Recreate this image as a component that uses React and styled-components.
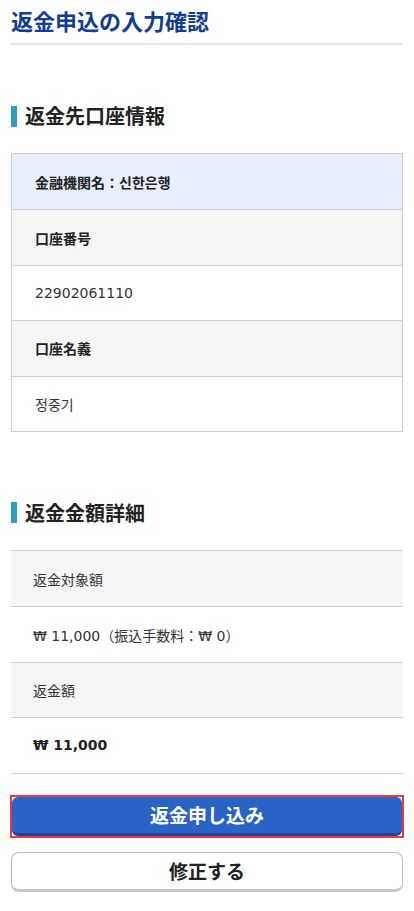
import React from 'react'
import styled, { createGlobalStyle } from 'styled-components'

const GlobalStyle = createGlobalStyle`
  html, body {
    margin: 0;
    padding: 0;
    background: #fff;
  }
  body {
    font-family: "DejaVu Sans", "Noto Sans CJK JP", "Noto Sans CJK KR", sans-serif;
    color: #333;
  }
`

const Page = styled.div`
  padding: 0 11px 18px;
`

const Header = styled.header`
  padding: 5px 0 8px;
  border-bottom: 2px solid #e6e6e6;
`

const Title = styled.h1`
  margin: 0;
  font-family: "Noto Sans CJK JP", sans-serif;
  font-size: 22px;
  line-height: 30px;
  font-weight: 700;
  color: #123d96;
`

const SectionHeading = styled.h2`
  display: flex;
  align-items: center;
  gap: 8px;
  margin: ${p => p.$top}px 0 25px;
  font-family: "Noto Sans CJK JP", sans-serif;
  font-size: 20px;
  line-height: 24px;
  font-weight: 700;
  color: #222;

  &::before {
    content: '';
    width: 6px;
    height: 21px;
    background: #2a9fc0;
  }
`

const Table = styled.div`
  border: ${p => (p.$boxed ? '1px solid #cfcfcf' : 'none')};
  border-top: 1px solid #cfcfcf;
  border-bottom: 1px solid #cfcfcf;
`

const rowBg = {
  blue: '#e7effd',
  gray: '#f5f5f5',
  white: '#fff',
}

const Row = styled.div`
  display: flex;
  align-items: center;
  box-sizing: border-box;
  height: 55.4px;
  padding: 0 ${p => (p.$boxed ? 23 : 22)}px;
  background: ${p => rowBg[p.$tone]};
  font-size: 14px;
  font-weight: ${p => (p.$bold ? 700 : 400)};
  color: ${p => (p.$bold ? '#222' : '#333')};

  & + & {
    border-top: 1px solid #cfcfcf;
  }
`

const Actions = styled.div`
  display: flex;
  flex-direction: column;
  gap: 14px;
  margin-top: 21px;
`

const FocusRing = styled.div`
  border: 2px solid #f0383c;
  margin: 0 -1px;
`

const Button = styled.button`
  display: block;
  width: 100%;
  box-sizing: border-box;
  font-family: "Noto Sans CJK JP", sans-serif;
  font-weight: 700;
  cursor: pointer;
`

const PrimaryButton = styled(Button)`
  height: 39px;
  border: none;
  border-bottom: 3px solid #1b43a0;
  border-radius: 6px;
  background: #2a63c6;
  color: #fff;
  font-size: 19px;
  line-height: 36px;
  padding: 0;
`

const SecondaryButton = styled(Button)`
  height: 40px;
  border: 1px solid #bdbdbd;
  border-bottom: 3px solid #c6c6c6;
  border-radius: 8px;
  background: #fff;
  color: #222;
  font-size: 19px;
  line-height: 34px;
  padding: 0;
`

const account = [
  { text: '金融機関名：신한은행', tone: 'blue', bold: true },
  { text: '口座番号', tone: 'gray', bold: true },
  { text: '22902061110', tone: 'white' },
  { text: '口座名義', tone: 'gray', bold: true },
  { text: '정중기', tone: 'white' },
]

const amounts = [
  { text: '返金対象額', tone: 'gray' },
  { text: '₩ 11,000（振込手数料：₩ 0）', tone: 'white' },
  { text: '返金額', tone: 'gray' },
  { text: '₩ 11,000', tone: 'white', bold: true },
]

const App = () => (
  <>
    <GlobalStyle />
    <Page>
      <Header>
        <Title>返金申込の入力確認</Title>
      </Header>

      <SectionHeading $top={59}>返金先口座情報</SectionHeading>
      <Table $boxed>
        {account.map(row => (
          <Row key={row.text} $boxed $tone={row.tone} $bold={row.bold}>
            {row.text}
          </Row>
        ))}
      </Table>

      <SectionHeading $top={69}>返金金額詳細</SectionHeading>
      <Table>
        {amounts.map(row => (
          <Row key={row.text} $tone={row.tone} $bold={row.bold}>
            {row.text}
          </Row>
        ))}
      </Table>

      <Actions>
        <FocusRing>
          <PrimaryButton>返金申し込み</PrimaryButton>
        </FocusRing>
        <SecondaryButton>修正する</SecondaryButton>
      </Actions>
    </Page>
  </>
)

export default App
